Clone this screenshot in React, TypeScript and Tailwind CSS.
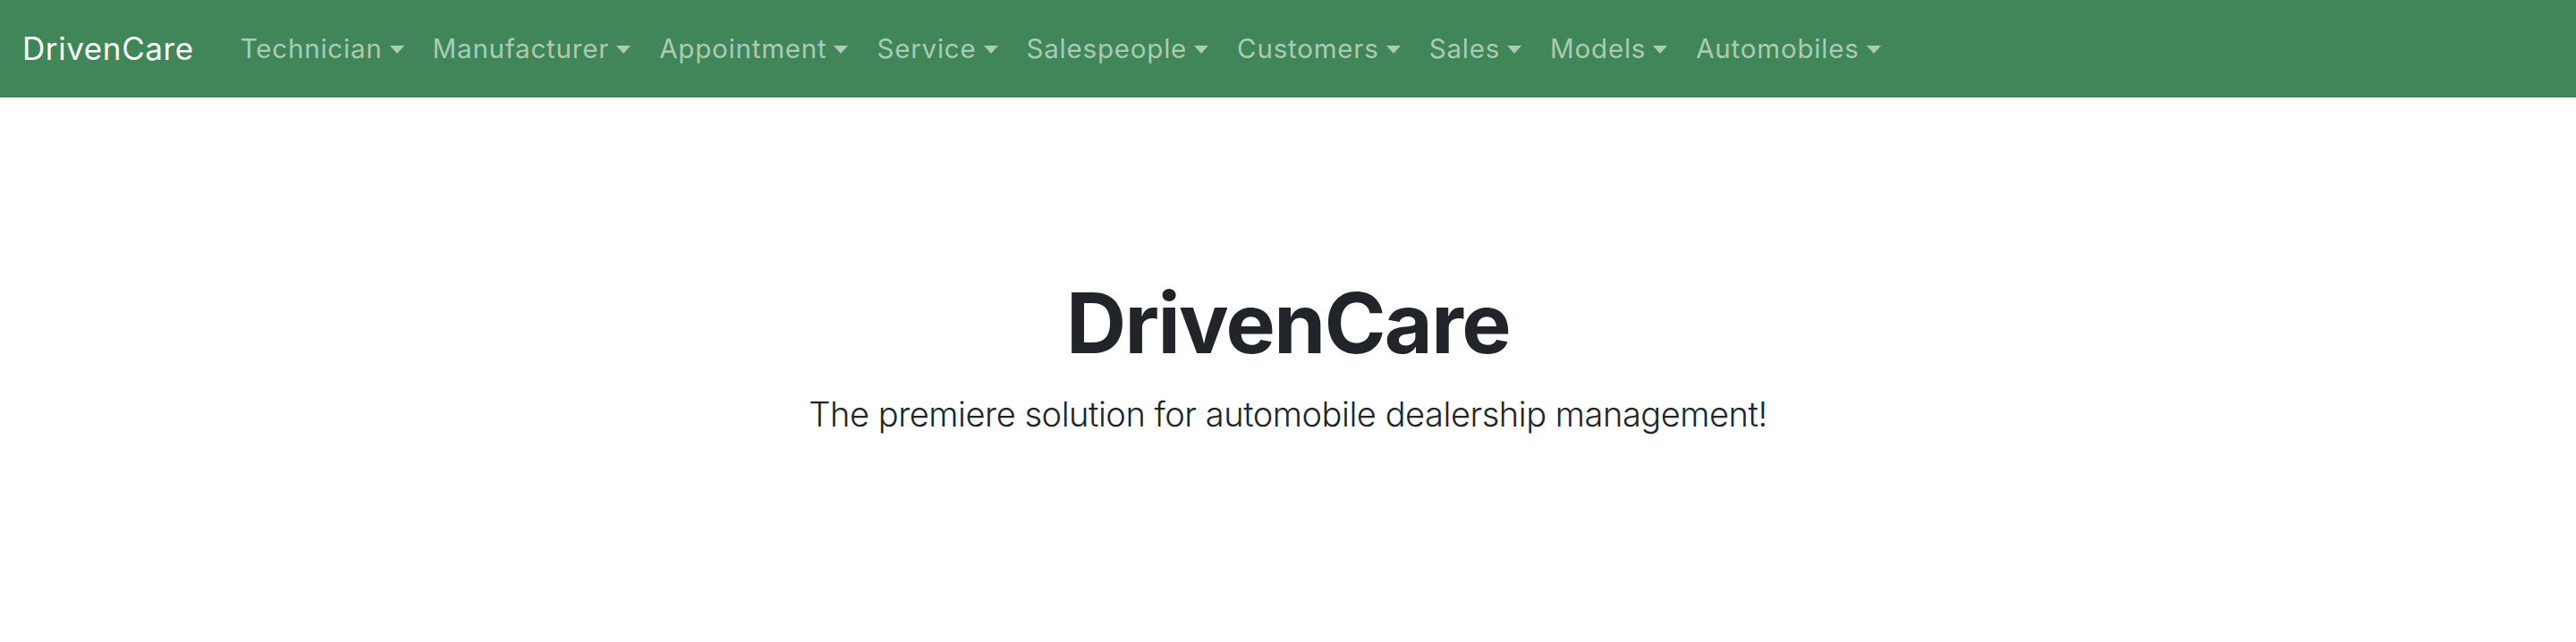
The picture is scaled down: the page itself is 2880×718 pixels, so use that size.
import React from "react";

const navItems = [
  "Technician",
  "Manufacturer",
  "Appointment",
  "Service",
  "Salespeople",
  "Customers",
  "Sales",
  "Models",
  "Automobiles",
];

function NavDropdown({ label }: { label: string }) {
  return (
    <a
      href="#"
      className="flex items-center px-4 text-[29.5px] leading-[1.5] tracking-[0.8px] text-[#a8ccb4] hover:text-white"
    >
      <span>{label}</span>
      {/* caret like bootstrap .dropdown-toggle::after */}
      <span className="ml-[8px] mt-[2px] inline-block h-0 w-0 border-x-[8.5px] border-t-[9px] border-x-transparent border-t-[#a8ccb4]" />
    </a>
  );
}

export default function App() {
  return (
    <div
      className="min-h-screen bg-white text-[#212529]"
      style={{ fontFamily: "Inter, 'Noto Sans', sans-serif" }}
    >
      {/* navbar */}
      <nav className="flex h-[109px] items-center bg-[#418659] px-[25px]">
        <a
          href="#"
          className="mr-[36px] text-[35px] leading-[1.5] tracking-[0.6px] text-white"
        >
          DrivenCare
        </a>
        <div className="flex items-center">
          {navItems.map((item) => (
            <NavDropdown key={item} label={item} />
          ))}
        </div>
      </nav>

      {/* hero */}
      <main className="flex flex-col items-center pt-[197px] text-center">
        <h1 className="text-[93px] font-bold leading-[1.2] tracking-[-1.6px]">
          DrivenCare
        </h1>
        <p className="mt-[17px] text-[38px] font-light leading-[1.5] tracking-[-0.45px]">
          The premiere solution for automobile dealership management!
        </p>
      </main>
    </div>
  );
}
